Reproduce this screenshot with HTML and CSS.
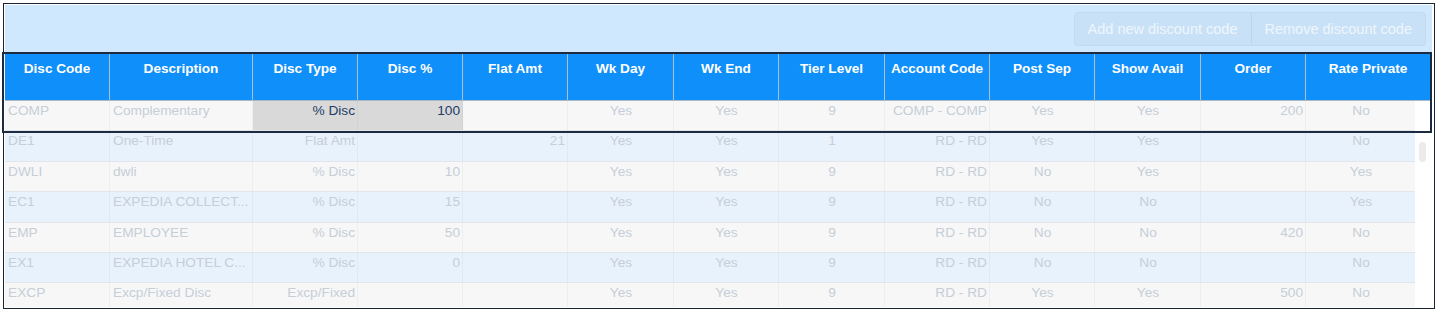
FILE: index.html
```html
<!DOCTYPE html>
<html>
<head>
  <meta charset="UTF-8">
  <title>Discount Codes</title>
  <link rel="stylesheet" href="styles.css">
</head>
<body>
  <div class="frame">
    <div class="toolbar">
      <div class="btn-group">
        <button type="button" class="tool-btn">Add new discount code</button>
        <button type="button" class="tool-btn">Remove discount code</button>
      </div>
    </div>
    <div class="grid">
      <div class="grid-head">
        <div class="hcell">Disc Code</div>
        <div class="hcell">Description</div>
        <div class="hcell">Disc Type</div>
        <div class="hcell">Disc %</div>
        <div class="hcell">Flat Amt</div>
        <div class="hcell">Wk Day</div>
        <div class="hcell">Wk End</div>
        <div class="hcell">Tier Level</div>
        <div class="hcell">Account Code</div>
        <div class="hcell">Post Sep</div>
        <div class="hcell">Show Avail</div>
        <div class="hcell">Order</div>
        <div class="hcell">Rate Private</div>
      </div>
      <div class="grid-main">
        <div class="grid-rows">
          <div class="row">
            <div class="cell">COMP</div>
            <div class="cell">Complementary</div>
            <div class="cell edited">% Disc</div>
            <div class="cell edited">100</div>
            <div class="cell"></div>
            <div class="cell">Yes</div>
            <div class="cell">Yes</div>
            <div class="cell">9</div>
            <div class="cell">COMP - COMP</div>
            <div class="cell">Yes</div>
            <div class="cell">Yes</div>
            <div class="cell">200</div>
            <div class="cell">No</div>
          </div>
          <div class="row">
            <div class="cell">DE1</div>
            <div class="cell">One-Time</div>
            <div class="cell">Flat Amt</div>
            <div class="cell"></div>
            <div class="cell">21</div>
            <div class="cell">Yes</div>
            <div class="cell">Yes</div>
            <div class="cell">1</div>
            <div class="cell">RD - RD</div>
            <div class="cell">Yes</div>
            <div class="cell">Yes</div>
            <div class="cell"></div>
            <div class="cell">No</div>
          </div>
          <div class="row">
            <div class="cell">DWLI</div>
            <div class="cell">dwli</div>
            <div class="cell">% Disc</div>
            <div class="cell">10</div>
            <div class="cell"></div>
            <div class="cell">Yes</div>
            <div class="cell">Yes</div>
            <div class="cell">9</div>
            <div class="cell">RD - RD</div>
            <div class="cell">No</div>
            <div class="cell">Yes</div>
            <div class="cell"></div>
            <div class="cell">Yes</div>
          </div>
          <div class="row">
            <div class="cell">EC1</div>
            <div class="cell">EXPEDIA COLLECT...</div>
            <div class="cell">% Disc</div>
            <div class="cell">15</div>
            <div class="cell"></div>
            <div class="cell">Yes</div>
            <div class="cell">Yes</div>
            <div class="cell">9</div>
            <div class="cell">RD - RD</div>
            <div class="cell">No</div>
            <div class="cell">No</div>
            <div class="cell"></div>
            <div class="cell">Yes</div>
          </div>
          <div class="row">
            <div class="cell">EMP</div>
            <div class="cell">EMPLOYEE</div>
            <div class="cell">% Disc</div>
            <div class="cell">50</div>
            <div class="cell"></div>
            <div class="cell">Yes</div>
            <div class="cell">Yes</div>
            <div class="cell">9</div>
            <div class="cell">RD - RD</div>
            <div class="cell">No</div>
            <div class="cell">No</div>
            <div class="cell">420</div>
            <div class="cell">No</div>
          </div>
          <div class="row">
            <div class="cell">EX1</div>
            <div class="cell">EXPEDIA HOTEL C...</div>
            <div class="cell">% Disc</div>
            <div class="cell">0</div>
            <div class="cell"></div>
            <div class="cell">Yes</div>
            <div class="cell">Yes</div>
            <div class="cell">9</div>
            <div class="cell">RD - RD</div>
            <div class="cell">No</div>
            <div class="cell">No</div>
            <div class="cell"></div>
            <div class="cell">No</div>
          </div>
          <div class="row">
            <div class="cell">EXCP</div>
            <div class="cell">Excp/Fixed Disc</div>
            <div class="cell">Excp/Fixed</div>
            <div class="cell"></div>
            <div class="cell"></div>
            <div class="cell">Yes</div>
            <div class="cell">Yes</div>
            <div class="cell">9</div>
            <div class="cell">RD - RD</div>
            <div class="cell">Yes</div>
            <div class="cell">Yes</div>
            <div class="cell">500</div>
            <div class="cell">No</div>
          </div>
        </div>
        <div class="scroll"><div class="scroll-thumb"></div></div>
      </div>
    </div>
    <!-- selection box drawn over the header and first row -->
    <div class="selection"></div>
  </div>
</body>
</html>
```

FILE: styles.css
```css
body {
margin: 0;
background-color: #fff;
font-family: 'Liberation Sans', Arial, Helvetica, sans-serif;
}
.frame {
--cols: 105px 143px 105px 105px 105px 106px 105px 106px 105px 105px 106px 105px 1fr;
position: relative;
box-sizing: border-box;
width: 1432px;
height: 306px;
margin: 3px 0 0 3px;
border: 1px solid #1b2433;
padding: 1px 2px 0 1px;
}
.toolbar {
height: 47px;
display: flex;
justify-content: flex-end;
align-items: center;
padding-right: 6px;
background-color: #d0e8fd;
}
.btn-group {
display: flex;
height: 34px;
box-sizing: border-box;
border: 1px solid #c2d9ee;
border-radius: 4px;
background-color: #c9e1f6;
}
.tool-btn {
border: none;
background: none;
padding: 0 13px;
font-family: 'Liberation Sans', Arial, Helvetica, sans-serif;
font-size: 14.5px;
color: #eef6fd;
}
.tool-btn + .tool-btn {
border-left: 1px solid #bdd4ea;
}
.grid {
width: 1425px;
}
.grid-head {
display: grid;
grid-template-columns: var(--cols);
height: 49px;
box-sizing: border-box;
border-top: 1px solid #9fb1c4;
border-bottom: 1px solid #a8b8c8;
background-color: #0f8ffa;
}
.hcell {
padding-top: 8px;
border-right: 1px solid #a9c0d6;
color: #fff;
font-size: 13.6px;
font-weight: 700;
line-height: 16px;
text-align: center;
white-space: nowrap;
}
.hcell:last-child {
border-right: none;
}
.grid-main {
display: flex;
height: 206px;
overflow: hidden;
}
.grid-rows {
width: 1410px;
}
.row {
display: grid;
grid-template-columns: var(--cols);
height: 30.4px;
box-sizing: border-box;
border-bottom: 1px solid #e2e5e9;
background-color: #f7f7f7;
}
.row:nth-child(even) {
background-color: #e7f2fd;
}
.cell {
padding: 2px 2px 0 3px;
border-right: 1px solid rgba(0, 0, 0, 0.035);
color: #c6ced8;
font-size: 13.7px;
line-height: 16px;
white-space: nowrap;
}
.cell:last-child {
border-right: none;
}
.cell:nth-child(3),
.cell:nth-child(4),
.cell:nth-child(5),
.cell:nth-child(9),
.cell:nth-child(12) {
text-align: right;
}
.cell:nth-child(6),
.cell:nth-child(7),
.cell:nth-child(8),
.cell:nth-child(10),
.cell:nth-child(11),
.cell:nth-child(13) {
text-align: center;
}
.cell.edited {
background-color: #d9d9d9;
color: #1d3d66;
}
.scroll {
width: 15px;
padding: 41px 0 0 4px;
box-sizing: border-box;
}
.scroll-thumb {
width: 7px;
height: 20px;
border-radius: 4px;
background-color: #ebebeb;
}
.selection {
position: absolute;
left: -2px;
top: 48px;
width: 1430px;
height: 81px;
box-sizing: border-box;
border: 2px solid #1c2a42;
pointer-events: none;
}
```
